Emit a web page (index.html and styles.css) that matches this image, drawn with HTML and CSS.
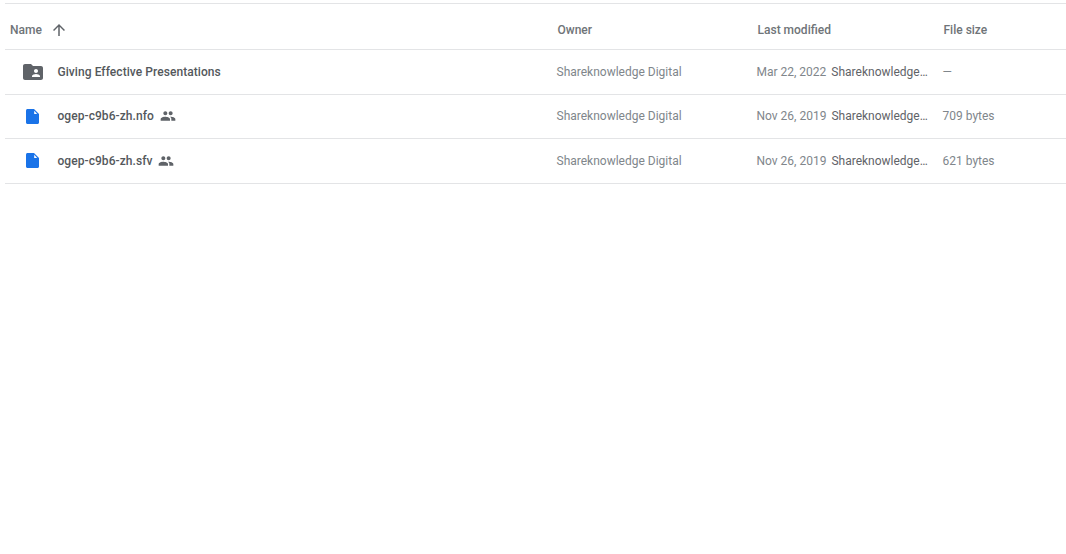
FILE: index.html
```html
<!DOCTYPE html>
<html lang="en">
<head>
<meta charset="utf-8">
<title>Files</title>
<link rel="stylesheet" href="styles.css">
</head>
<body>
<div class="list">
  <div class="row head">
    <div class="c-name"><span class="h-name">Name</span><svg class="arrow" width="18" height="18" viewBox="0 0 24 24"><path fill="#5f6368" d="M4 12l1.410 1.410L11 7.830V20h2V7.830l5.580 5.590L20 12l-8-8-8 8z"/></svg></div>
    <div class="c-owner">Owner</div>
    <div class="c-mod">Last modified</div>
    <div class="c-size">File size</div>
  </div>
  <div class="row item">
    <div class="c-name"><span class="ico"><svg width="24" height="24" viewBox="0 0 24 24"><path fill="#5f6368" d="M20 6h-8l-2-2H4c-1.100 0-2 .9-2 2v12c0 1.100.9 2 2 2h16c1.100 0 2-.9 2-2V8c0-1.100-.9-2-2-2zm-5 3c1.100 0 2 .9 2 2s-.9 2-2 2-2-.9-2-2 .9-2 2-2zm4 8h-8v-1c0-1.330 2.670-2 4-2s4 .67 4 2v1z"/></svg></span><span class="fname">Giving Effective Presentations</span></div>
    <div class="c-owner">Shareknowledge Digital</div>
    <div class="c-mod"><span class="date">Mar 22, 2022</span><span class="by">Shareknowledge Digital</span></div>
    <div class="c-size">—</div>
  </div>
  <div class="row item">
    <div class="c-name"><span class="ico"><svg width="13" height="15" viewBox="0 0 13 15"><path fill="#1a73e8" d="M1.500 0H8l5 5v8.500c0 .83-.67 1.500-1.500 1.500h-10C.67 15 0 14.330 0 13.500v-12C0 .67.67 0 1.500 0z"/><path fill="#fff" d="M8.200 1.800L11.200 5H8.200z"/></svg></span><span class="fname">ogep-c9b6-zh.nfo</span><svg class="shared" width="16" height="16" viewBox="0 0 24 24"><path fill="#5f6368" d="M16 11c1.660 0 2.990-1.340 2.990-3S17.660 5 16 5s-3 1.340-3 3 1.340 3 3 3zm-8 0c1.660 0 2.990-1.340 2.990-3S9.660 5 8 5 5 6.340 5 8s1.340 3 3 3zm0 2c-2.330 0-7 1.170-7 3.500V19h14v-2.500c0-2.330-4.670-3.500-7-3.500zm8 0c-.29 0-.62.020-.97.050 1.160.840 1.970 1.970 1.970 3.450V19h6v-2.500c0-2.330-4.670-3.500-7-3.500z"/></svg></div>
    <div class="c-owner">Shareknowledge Digital</div>
    <div class="c-mod"><span class="date">Nov 26, 2019</span><span class="by">Shareknowledge Digital</span></div>
    <div class="c-size">709 bytes</div>
  </div>
  <div class="row item">
    <div class="c-name"><span class="ico"><svg width="13" height="15" viewBox="0 0 13 15"><path fill="#1a73e8" d="M1.500 0H8l5 5v8.500c0 .83-.67 1.500-1.500 1.500h-10C.67 15 0 14.330 0 13.500v-12C0 .67.67 0 1.500 0z"/><path fill="#fff" d="M8.200 1.800L11.200 5H8.200z"/></svg></span><span class="fname">ogep-c9b6-zh.sfv</span><svg class="shared" width="16" height="16" viewBox="0 0 24 24"><path fill="#5f6368" d="M16 11c1.660 0 2.990-1.340 2.990-3S17.660 5 16 5s-3 1.340-3 3 1.340 3 3 3zm-8 0c1.660 0 2.990-1.340 2.990-3S9.660 5 8 5 5 6.340 5 8s1.340 3 3 3zm0 2c-2.330 0-7 1.170-7 3.500V19h14v-2.500c0-2.330-4.670-3.500-7-3.500zm8 0c-.29 0-.62.020-.97.050 1.160.840 1.970 1.970 1.970 3.450V19h6v-2.500c0-2.330-4.670-3.500-7-3.500z"/></svg></div>
    <div class="c-owner">Shareknowledge Digital</div>
    <div class="c-mod"><span class="date">Nov 26, 2019</span><span class="by">Shareknowledge Digital</span></div>
    <div class="c-size">621 bytes</div>
  </div>
</div>
</body>
</html>
```

FILE: styles.css
```css
html, body { margin: 0; padding: 0; background: #fff; }
body { height: 554px; overflow: hidden; font-family: Roboto, "Liberation Sans", sans-serif; color: #5f6368; font-size: 12px; }
.list { margin: 3px 0 0 5px; width: 1061px; border-top: 1px solid #e3e4e6; }
.row { display: grid; grid-template-columns: 551.500px 200px 186px 1fr; align-items: center; border-bottom: 1px solid #e3e4e6; }
.head { height: 46px; padding-top: 7px; box-sizing: border-box; font-weight: 500; color: #6f7478; }
.item { height: 44.500px; box-sizing: border-box; }
.c-name { display: flex; align-items: center; min-width: 0; }
.h-name { margin-left: 5px; }
.arrow { margin-left: 8px; }
.ico { width: 24px; height: 24px; margin-left: 15.500px; display: flex; align-items: center; justify-content: center; }
.fname { margin-left: 13px; color: #54585c; font-weight: 500; letter-spacing: .06px; }
.shared { margin-left: 6px; }
.head .c-owner, .head .c-mod, .head .c-size { padding-left: 1px; }
.item .c-owner, .item .c-mod, .item .c-size { color: #80868b; }
.c-mod { display: flex; min-width: 0; }
.date { flex: none; }
.item .c-mod .by { margin-left: 5px; width: 97px; color: #5f6368; white-space: nowrap; overflow: hidden; text-overflow: ellipsis; }
```
